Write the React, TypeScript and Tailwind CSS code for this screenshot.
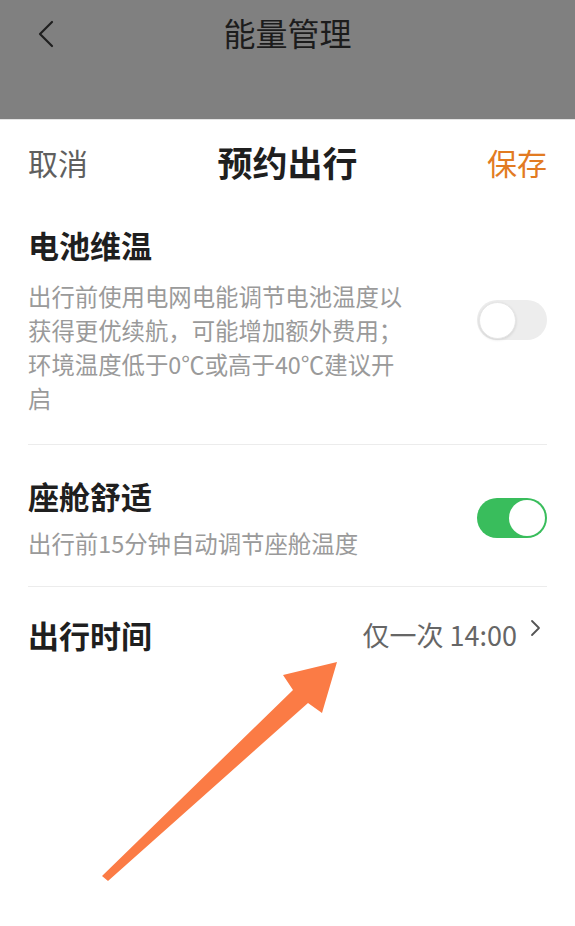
import React from "react";

const font = { fontFamily: '"Noto Sans CJK SC", "Noto Sans", sans-serif' };

function Toggle({ on }: { on: boolean }) {
  if (on) {
    return (
      <div className="flex h-[40px] w-[70px] shrink-0 items-center justify-end rounded-full bg-[#39bd5c] p-[2px]">
        <div className="h-[36px] w-[36px] rounded-full bg-white" />
      </div>
    );
  }
  return (
    <div className="flex h-[40px] w-[70px] shrink-0 items-center justify-start rounded-full bg-[#ededed] p-[2px]">
      <div className="h-[37px] w-[37px] rounded-full border border-[#e6e6e6] bg-white shadow-[0_1px_3px_rgba(0,0,0,0.12)]" />
    </div>
  );
}

export default function App() {
  return (
    <div className="relative min-h-[926px] w-[575px] overflow-hidden bg-white" style={font}>
      {/* dimmed page header */}
      <div className="relative flex h-[119px] items-start justify-center bg-[#808080] pt-[11px]">
        <svg className="absolute left-[36px] top-[20px]" width="20" height="28" viewBox="0 0 20 28">
          <path d="M16 2 L4 14 L16 26" fill="none" stroke="#1f1f1f" strokeWidth="2.2" strokeLinecap="round" strokeLinejoin="round" />
        </svg>
        <div className="text-[32px] leading-[42px] text-[#1c1c1c]">能量管理</div>
      </div>
      <div className="h-px bg-[#e4e4e4]" />

      {/* sheet */}
      <div className="px-[28px]">
        <div className="relative flex h-[84px] items-center justify-between">
          <span className="text-[30px] leading-[40px] text-[#5f5f5f]">取消</span>
          <span className="absolute left-1/2 -translate-x-1/2 text-[35px] font-bold leading-[44px] text-[#1f1f1f]">预约出行</span>
          <span className="text-[30px] leading-[40px] text-[#e27b22]">保存</span>
        </div>

        {/* 电池维温 */}
        <div className="flex items-center justify-between border-b border-[#ececec] pb-[29px] pt-[21px]">
          <div>
            <div className="text-[31px] font-bold leading-[40px] text-[#1f1f1f]">电池维温</div>
            <div className="mt-[14px] text-[23.4px] leading-[34px] text-[#9a9a9a]">
              出行前使用电网电能调节电池温度以
              <br />
              获得更优续航，可能增加额外费用；
              <br />
              环境温度低于0℃或高于40℃建议开
              <br />
              启
            </div>
          </div>
          <Toggle on={false} />
        </div>

        {/* 座舱舒适 */}
        <div className="flex items-center justify-between border-b border-[#ececec] pb-[26px] pt-[31px]">
          <div>
            <div className="text-[31px] font-bold leading-[40px] text-[#1f1f1f]">座舱舒适</div>
            <div className="mt-[10px] text-[23.4px] leading-[34px] text-[#9a9a9a]">出行前15分钟自动调节座舱温度</div>
          </div>
          <Toggle on={true} />
        </div>

        {/* 出行时间 */}
        <div className="flex items-center justify-between pt-[28px]">
          <div className="text-[31px] font-bold leading-[40px] text-[#1f1f1f]">出行时间</div>
          <div className="mr-[6px] flex items-start gap-[13px]">
            <span className="text-[27px] leading-[36px] text-[#666666]">仅一次 14:00</span>
            <svg className="mt-[2px]" width="11" height="20" viewBox="0 0 11 20">
              <path d="M2 2 L9 9 L2 16" fill="none" stroke="#555555" strokeWidth="1.8" strokeLinecap="round" strokeLinejoin="round" />
            </svg>
          </div>
        </div>
      </div>

      {/* annotation arrow */}
      <svg className="pointer-events-none absolute left-0 top-0" width="575" height="926" viewBox="0 0 575 926">
        <polygon
          points="102,876 108,881 308,703 322,713 337,662 283,675 293,690"
          fill="#fb7b45"
        />
      </svg>
    </div>
  );
}
